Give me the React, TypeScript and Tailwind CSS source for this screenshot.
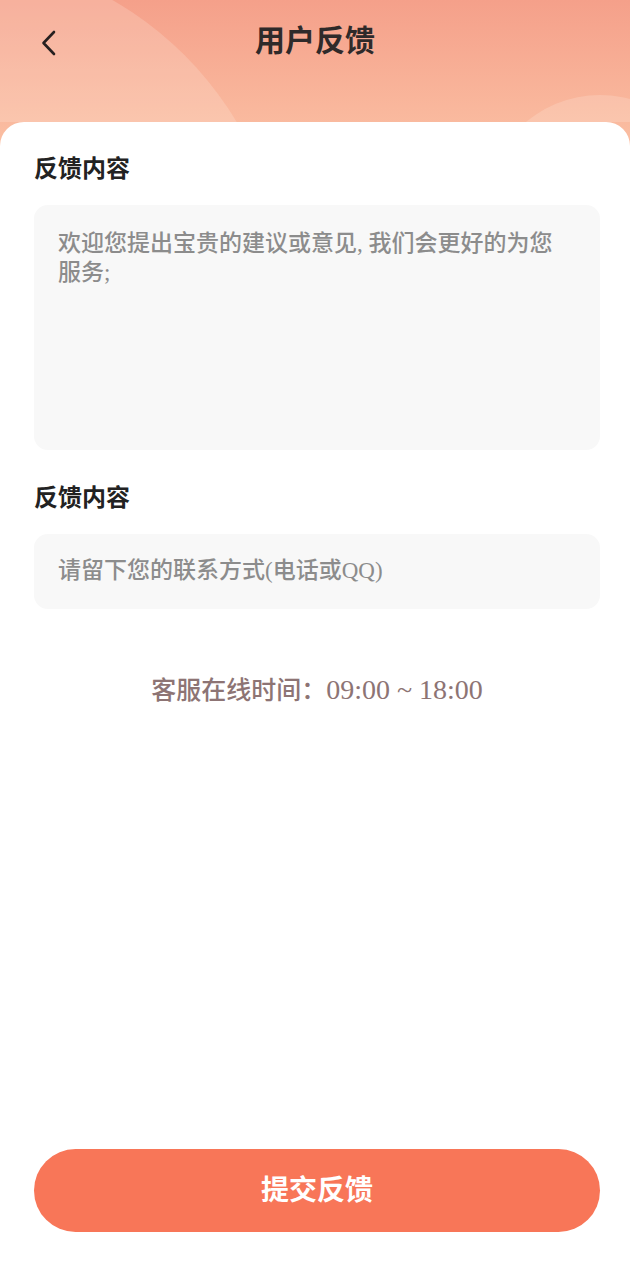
import React from "react";

const FONT = {
  fontFamily: '"Liberation Serif", "Noto Sans CJK SC", serif',
};

export default function App() {
  return (
    <div
      className="w-[630px] h-[1280px] bg-white flex flex-col bg-[linear-gradient(180deg,#f5a08a_0%,#fbc2a5_100%)] bg-no-repeat bg-[length:100%_160px]"
      style={FONT}
    >
      <div className="relative h-[122px] overflow-hidden">
        <div className="absolute left-[-406px] top-[-46px] w-[692px] h-[692px] rounded-full bg-[#fff3ea]/20" />
        <div className="absolute left-[485px] top-[95px] w-[230px] h-[230px] rounded-full bg-[#fff3ea]/20" />
        <div className="relative h-[82px] flex items-center justify-center">
          <svg
            className="absolute left-[38px] top-[29px]"
            width="22"
            height="28"
            viewBox="0 0 22 28"
            fill="none"
          >
            <path
              d="M16 3 L5.5 14 L16 25"
              stroke="#262020"
              strokeWidth="2.6"
              strokeLinecap="round"
              strokeLinejoin="round"
            />
          </svg>
          <div className="text-[30px] font-bold text-[#2f2a2a] leading-none">用户反馈</div>
        </div>
      </div>

      <div className="flex-1 bg-white rounded-t-[24px] flex flex-col pl-[34px] pr-[30px] pt-[33px] pb-[48px]">
        <div className="text-[24px] font-semibold text-[#222] leading-[28px]">反馈内容</div>
        <div className="mt-[22px] h-[245px] rounded-[14px] bg-[#f8f8f8] px-[24px] pt-[24px] text-[23px] leading-[29px] text-[#8c8c8c] font-medium">
          欢迎您提出宝贵的建议或意见, 我们会更好的为您
          <br />
          服务;
        </div>

        <div className="mt-[34px] text-[24px] font-semibold text-[#222] leading-[28px]">反馈内容</div>
        <div className="mt-[22px] h-[75px] rounded-[14px] bg-[#f8f8f8] px-[24px] flex items-center text-[23px] text-[#8c8c8c] font-medium">
          请留下您的联系方式(电话或QQ)
        </div>

        <div className="mt-[66px] text-center text-[25px] leading-[30px] text-[#8d7474] font-medium">
          客服在线时间：<span className="text-[28px]">09:00 ~ 18:00</span>
        </div>

        <div className="flex-1" />

        <button className="h-[83px] w-full rounded-full bg-[#f87658] text-white text-[28px] font-bold flex items-center justify-center">
          提交反馈
        </button>
      </div>
    </div>
  );
}
